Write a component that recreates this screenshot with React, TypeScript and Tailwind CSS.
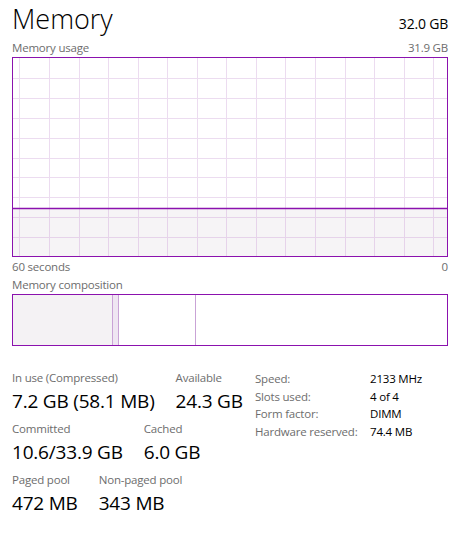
import React from 'react';

const vLines = [6, 36, 66, 95, 125, 154, 184, 213, 243, 272, 302, 332, 361, 391, 420];
const hLines = [20, 40, 60, 80, 100, 119, 139, 159, 179];

function UsageGraph() {
  // interior is 434 x 198
  return (
    <div className="border border-[#8b12ae] h-[200px] bg-white">
      <svg width="434" height="198" className="block">
        {vLines.map((x) => (
          <line key={`v${x}`} x1={x + 0.5} y1={0} x2={x + 0.5} y2={198} stroke="#ecdcf0" strokeWidth={1} />
        ))}
        {hLines.map((y) => (
          <line key={`h${y}`} x1={0} y1={y + 0.5} x2={434} y2={y + 0.5} stroke="#ecdcf0" strokeWidth={1} />
        ))}
        <rect x={0} y={151} width={434} height={47} fill="#f4f2f4" fillOpacity={0.85} />
        {vLines.map((x) => (
          <line key={`vf${x}`} x1={x + 0.5} y1={151} x2={x + 0.5} y2={198} stroke="#e6d3ea" strokeWidth={1} />
        ))}
        {hLines.filter((y) => y > 151).map((y) => (
          <line key={`hf${y}`} x1={0} y1={y + 0.5} x2={434} y2={y + 0.5} stroke="#e6d3ea" strokeWidth={1} />
        ))}
        <line x1={0} y1={150.5} x2={434} y2={150.5} stroke="#8b12ae" strokeWidth={1.3} />
      </svg>
    </div>
  );
}

function CompositionBar() {
  return (
    <div className="flex h-[52px] border border-[#8b12ae] bg-white">
      <div className="w-[100px] bg-[#f4f2f4] border-r border-[#c9a3d6]" />
      <div className="w-[6px] bg-[#efe6f2] border-r border-[#c9a3d6]" />
      <div className="w-[77px] border-r border-[#c9a3d6]" />
      <div className="flex-1" />
    </div>
  );
}

function Stat({ label, value }: { label: string; value: string }) {
  return (
    <div className="flex flex-col whitespace-nowrap">
      <span className="text-[11.5px] leading-[16px] tracking-[-0.2px] text-[#6d6d6d]">{label}</span>
      <span className="text-[19px] leading-[30px] tracking-[-0.2px] text-black">{value}</span>
    </div>
  );
}

const details = [
  ['Speed:', '2133 MHz'],
  ['Slots used:', '4 of 4'],
  ['Form factor:', 'DIMM'],
  ['Hardware reserved:', '74.4 MB'],
];

export default function App() {
  return (
    <div
      className="w-[460px] h-[541px] bg-white px-3 overflow-hidden"
      style={{ fontFamily: '"Open Sans", "Noto Sans", sans-serif' }}
    >
      {/* Header */}
      <div className="flex items-baseline justify-between h-[38px]">
        <h1 className="text-[27px] leading-[38px] font-light text-black">Memory</h1>
        <span className="text-[14px] tracking-[-0.2px] text-black">32.0 GB</span>
      </div>

      <div className="flex justify-between text-[11.5px] tracking-[-0.2px] leading-[19px] text-[#6d6d6d]">
        <span>Memory usage</span>
        <span>31.9 GB</span>
      </div>

      <UsageGraph />

      <div className="flex justify-between text-[11.5px] tracking-[-0.2px] leading-[17px] text-[#6d6d6d] mt-[1px]">
        <span>60 seconds</span>
        <span>0</span>
      </div>

      <div className="text-[11.5px] tracking-[-0.2px] leading-[19px] text-[#6d6d6d]">Memory composition</div>

      <CompositionBar />

      {/* Stats */}
      <div className="flex mt-[24px]">
        <div className="flex flex-col w-[243px] gap-[5px]">
          <div className="flex gap-[21px]">
            <Stat label="In use (Compressed)" value="7.2 GB (58.1 MB)" />
            <Stat label="Available" value="24.3 GB" />
          </div>
          <div className="flex gap-[21px]">
            <Stat label="Committed" value="10.6/33.9 GB" />
            <Stat label="Cached" value="6.0 GB" />
          </div>
          <div className="flex gap-[21px]">
            <Stat label="Paged pool" value="472 MB" />
            <Stat label="Non-paged pool" value="343 MB" />
          </div>
        </div>
        <div className="flex flex-col text-[11.5px] tracking-[-0.2px] leading-[17.6px]">
          {details.map(([k, v]) => (
            <div key={k} className="flex whitespace-nowrap">
              <span className="w-[115px] text-[#6d6d6d]">{k}</span>
              <span className="text-black">{v}</span>
            </div>
          ))}
        </div>
      </div>
    </div>
  );
}
